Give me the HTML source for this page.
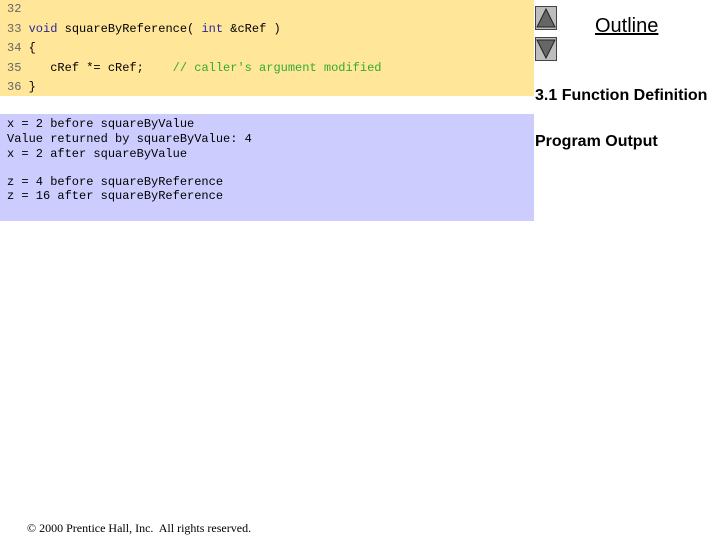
<!DOCTYPE html>
<html><head><style>
body{margin:0;width:720px;height:540px;background:#fff;position:relative;overflow:hidden;font-family:"Liberation Sans",sans-serif}
.y{position:absolute;left:0;top:0;width:534px;height:96px;background:#ffe699}
.b{position:absolute;left:0;top:114px;width:534px;height:107px;background:#ccccff}
.t{position:absolute;font-family:"Liberation Mono",monospace;font-size:12px;white-space:pre;line-height:15px}
.n{color:#666}.k{color:#2a2a99}.c{color:#33aa33}
.btn{position:absolute;left:535px;width:22px;height:24px;background:#bdbdbd;border:1px solid #444;box-sizing:border-box}
</style></head><body>
<div class="y"></div><div class="b"></div>
<div class="t" style="left:7px;top:2px"><span class="n">32</span></div>
<div class="t" style="left:7px;top:22px"><span class="n">33</span> <span class="k">void</span> squareByReference( <span class="k">int</span> &amp;cRef )</div>
<div class="t" style="left:7px;top:41px"><span class="n">34</span> {</div>
<div class="t" style="left:7px;top:61px"><span class="n">35</span>    cRef *= cRef;    <span class="c">// caller's argument modified</span></div>
<div class="t" style="left:7px;top:80px"><span class="n">36</span> }</div>
<div class="t" style="left:7px;top:117px">x = 2 before squareByValue
Value returned by squareByValue: 4
x = 2 after squareByValue</div>
<div class="t" style="left:7px;top:175px;line-height:14px">z = 4 before squareByReference
z = 16 after squareByReference</div>
<div class="btn" style="top:6px"><svg width="20" height="22"><polygon points="10,2 19,20 1,20" fill="#666" stroke="#222"/></svg></div>
<div class="btn" style="top:37px"><svg width="20" height="22"><polygon points="1,2 19,2 10,20" fill="#666" stroke="#222"/></svg></div>
<div style="position:absolute;left:595px;top:15px;font-size:20px;text-decoration:underline">Outline</div>
<div style="position:absolute;left:535px;top:87px;font-size:16px;font-weight:bold">3.1 Function Definition</div>
<div style="position:absolute;left:535px;top:133px;font-size:16px;font-weight:bold">Program Output</div>
<div style="position:absolute;left:27px;top:521px;font-family:'Liberation Serif',serif;font-size:12px">© 2000 Prentice Hall, Inc.&nbsp; All rights reserved.</div>
</body></html>
